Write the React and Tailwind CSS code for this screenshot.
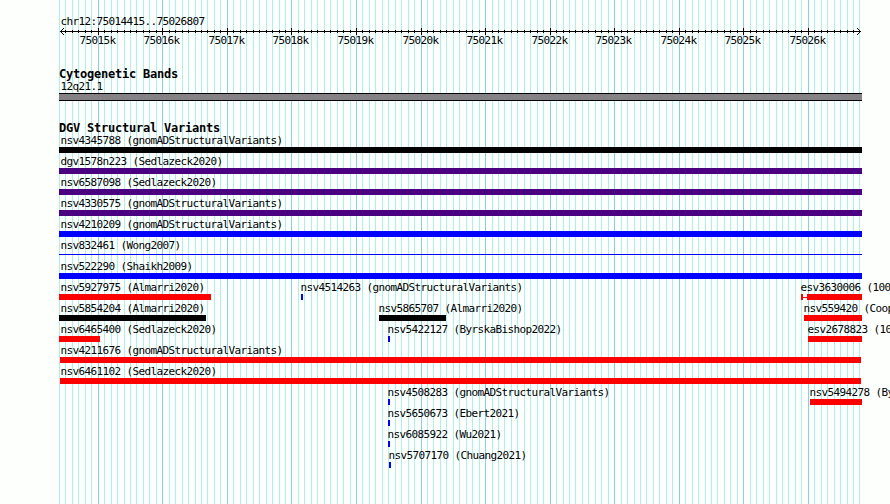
const FONT = "font-['DejaVu_Sans_Mono',monospace] text-[11px] leading-[13px] whitespace-pre";

const GRID = Array.from({ length: 125 }, (_, i) => ({
  x: Math.floor(98.26 + (i - 6) * 6.455),
  major: (i - 6) % 10 === 0,
}));

const TICK_LABELS = Array.from({ length: 12 }, (_, i) => ({
  x: GRID[6 + i * 10].x - 18.6,
  text: `${75015 + i}k`,
}));

const COLORS = {
  black: "bg-black",
  indigo: "bg-[#4b0082]",
  blue: "bg-[#0000ff]",
  red: "bg-[#ff0000]",
};

// each row holds the variants that share one line, placed by start pixel
const ROWS = [
  [{ name: "nsv4345788 (gnomADStructuralVariants)", x: 59, w: 803, color: "black" }],
  [{ name: "dgv1578n223 (Sedlazeck2020)", x: 59, w: 803, color: "indigo" }],
  [{ name: "nsv6587098 (Sedlazeck2020)", x: 59, w: 803, color: "indigo" }],
  [{ name: "nsv4330575 (gnomADStructuralVariants)", x: 59, w: 803, color: "indigo" }],
  [{ name: "nsv4210209 (gnomADStructuralVariants)", x: 59, w: 803, color: "blue" }],
  [{ name: "nsv832461 (Wong2007)", x: 59, w: 803, color: "blue", thin: true }],
  [{ name: "nsv522290 (Shaikh2009)", x: 59, w: 803, color: "blue" }],
  [
    { name: "nsv5927975 (Almarri2020)", x: 59, w: 152, color: "red" },
    { name: "nsv4514263 (gnomADStructuralVariants)", x: 301, w: 2, color: "blue", label: 300 },
    { name: "esv3630006 (1000GenomesPhase3)", x: 807, w: 55, color: "red", label: 800, whisker: true },
  ],
  [
    { name: "nsv5854204 (Almarri2020)", x: 59, w: 147, color: "black" },
    { name: "nsv5865707 (Almarri2020)", x: 379, w: 67, color: "black", label: 378 },
    { name: "nsv559420 (Cooper2011)", x: 804, w: 58, color: "red", label: 803 },
  ],
  [
    { name: "nsv6465400 (Sedlazeck2020)", x: 59, w: 41, color: "red" },
    { name: "nsv5422127 (ByrskaBishop2022)", x: 388, w: 2, color: "blue", label: 387 },
    { name: "esv2678823 (1000GenomesPhase1)", x: 808, w: 54, color: "red", label: 807 },
  ],
  [{ name: "nsv4211676 (gnomADStructuralVariants)", x: 60, w: 801, color: "red" }],
  [{ name: "nsv6461102 (Sedlazeck2020)", x: 60, w: 801, color: "red" }],
  [
    { name: "nsv4508283 (gnomADStructuralVariants)", x: 388, w: 2, color: "blue", label: 387 },
    { name: "nsv5494278 (ByrskaBishop2022)", x: 810, w: 52, color: "red", label: 809 },
  ],
  [{ name: "nsv5650673 (Ebert2021)", x: 388, w: 2, color: "blue", label: 387 }],
  [{ name: "nsv6085922 (Wu2021)", x: 388, w: 2, color: "blue", label: 387 }],
  [{ name: "nsv5707170 (Chuang2021)", x: 389, w: 2, color: "blue", label: 388 }],
];

function GridLines() {
  return (
    <svg className="absolute inset-0" width="890" height="504" shapeRendering="crispEdges">
      {GRID.filter((g) => g.x < 862).map((g) => (
        <rect key={g.x} x={g.x} y="0" width="1" height="504" fill={g.major ? "#87ceeb" : "#afeeee"} />
      ))}
    </svg>
  );
}

function Ruler() {
  return (
    <svg className="block" width="890" height="9" shapeRendering="crispEdges">
      <rect x="60" y="4" width="801" height="1" />
      {GRID.filter((g) => g.x > 60 && g.x < 859).map((g) => (
        <rect key={g.x} x={g.x} y={g.major ? 1 : 3} width="1" height={g.major ? 7 : 3} />
      ))}
      {[1, 2, 3].map((d) => (
        <g key={d}>
          <rect x={60 + d} y={4 - d} width="1" height="1" />
          <rect x={60 + d} y={4 + d} width="1" height="1" />
          <rect x={860 - d} y={4 - d} width="1" height="1" />
          <rect x={860 - d} y={4 + d} width="1" height="1" />
        </g>
      ))}
    </svg>
  );
}

function Variant({ name, x, w, color, label = 60, thin, whisker }) {
  return (
    <>
      <span className="absolute top-0 tracking-[-0.62px]" style={{ left: label + 0.5 }}>
        {name}
      </span>
      <div
        className={`absolute ${thin ? "top-[15px] h-px" : "top-[13px] h-[6px]"} ${COLORS[color]}`}
        style={{ left: x, width: w }}
      />
      {whisker && (
        <div className="absolute left-[801px] top-[13px] flex h-[6px] w-[6px]">
          <div className="h-full w-[2px] bg-[#ff0000]" />
          <div className="mt-[3px] h-px flex-1 bg-[#ff0000]" />
        </div>
      )}
    </>
  );
}

export default function App() {
  return (
    <div className={`relative h-[504px] w-[890px] overflow-hidden bg-[#fdfffd] text-black ${FONT}`}>
      <GridLines />
      <div className="relative flex flex-col pt-[15px]">
        <div className="h-[12px] pl-[60.5px] tracking-[-0.62px]">chr12:75014415..75026807</div>
        <Ruler />
        <div className="relative -mt-[2px] h-[34px] tracking-[-0.62px]">
          {TICK_LABELS.map((t) => (
            <span key={t.text} className="absolute top-0" style={{ left: t.x }}>
              {t.text}
            </span>
          ))}
        </div>

        <div className="h-[12px] pl-[59px] text-[12px] font-bold tracking-[-0.22px]">Cytogenetic Bands</div>
        <div className="h-[13px] pl-[60.5px] tracking-[-0.62px]">12q21.1</div>
        <div className="ml-[59px] h-[8px] w-[803px] border-y border-black bg-[#848284]" />

        <div className="mt-[21px] h-[12px] pl-[59px] text-[12px] font-bold tracking-[-0.22px]">
          DGV Structural Variants
        </div>
        {ROWS.map((row) => (
          <div key={row[0].name} className="relative h-[21px]">
            {row.map((v) => (
              <Variant key={v.name} {...v} />
            ))}
          </div>
        ))}
      </div>
    </div>
  );
}
